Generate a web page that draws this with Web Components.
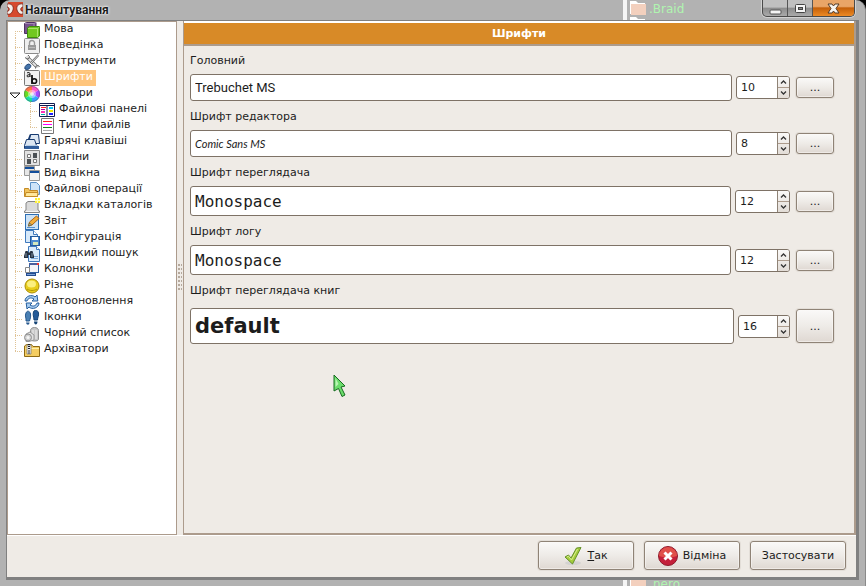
<!DOCTYPE html>
<html lang="uk">
<head>
<meta charset="utf-8">
<title>Налаштування</title>
<style>
html, body { height: 100%; margin: 0; }
body { background: #000; font: 11px/13px "DejaVu Sans", sans-serif; color: #1c1c1c; }
</style>
</head>
<body>
<settings-window></settings-window>
<script>
const svg = (body, size = 16) => `<svg viewBox="0 0 16 16" width="${size}" height="${size}" aria-hidden="true">${body}</svg>`;
const doc = '<path d="M4.500 .5h8l3 3v12h-11z" fill="#dcecfb" stroke="#3f79bd"/><path d="M12.500 .5v3h3" fill="#fff" stroke="#3f79bd"/>';
const ICONS = {
  lang: '<path d="M.5 1.500l2-1h9.500v10l-2 1H.5z" fill="#76528c" stroke="#4e3163"/><path d="M1 1.500h9l2-1M10 2v9" stroke="#a58ab5" fill="none"/><path d="M3.500 6l2-1.500h10v9.500l-2 1.500h-10z" fill="#72c820" stroke="#3f8b0c"/><path d="M4 6.500h9.500V15M13.500 6.500l2-1.500" stroke="#a7e66a" fill="none"/>',
  lock: '<rect x=".5" y=".5" width="15" height="15" rx="1" fill="#efefef" stroke="#8a8a8a"/><path d="M5.500 7V5a2.500 2.500 0 0 1 5 0v2" fill="none" stroke="#999" stroke-width="1.400"/><rect x="4" y="7" width="8" height="5" fill="#999"/><path d="M5 9.500h6" stroke="#bbb"/>',
  tools: '<path d="M3 3l10 10" stroke="#666" stroke-width="3.200"/><path d="M3 3l10 10" stroke="#e4e4e4" stroke-width="1.800"/><path d="M1 3.500L3 5l2-.5.5-2L4 1M11.500 14.500l.5-2.500 2.500-.5 1 1.500" stroke="#666" fill="#ddd"/><path d="M14.500 1L7 9" stroke="#666" stroke-width="2"/><path d="M14.500 1L7 9" stroke="#ddd"/><path d="M1 15c-.8-2 1-4.500 4-5l2 1.500c-.5 3-3 4.800-6 3.500z" fill="#4675ab" stroke="#1e4478"/>',
  fonts: '<rect x=".5" y=".5" width="15" height="15" rx="1" fill="#f1f1f1" stroke="#777"/><path d="M3 3c1-.8 3-.6 3 .7V7M6 4.800c-1.500-.2-3 0-3 1.200S5 7 6 5.800" fill="none" stroke="#111"/><path d="M8 5v9" stroke="#111" stroke-width="1.800"/><circle cx="10.300" cy="11" r="2.300" fill="none" stroke="#111" stroke-width="1.600"/>',
  colors: '<path d="M8 8V0a8 8 0 0 1 7 4z" fill="#ff58c8"/><path d="M8 8l7-4a8 8 0 0 1 0 8z" fill="#a44bff"/><path d="M8 8l7 4a8 8 0 0 1-7 4z" fill="#32a5ff"/><path d="M8 8v8a8 8 0 0 1-7-4z" fill="#17e39d"/><path d="M8 8l-7 4a8 8 0 0 1 0-8z" fill="#65e01f"/><path d="M8 8L1 4a8 8 0 0 1 7-4z" fill="#ff7440"/><circle cx="8" cy="8" r="4" fill="#fff" opacity=".45"/><circle cx="8" cy="8" r="2" fill="#fff" opacity=".6"/><circle cx="8" cy="8" r="7.500" fill="none" stroke="#557" opacity=".5"/>',
  panels: '<path d="M.5 1.500h15v13H.5z" fill="#fff" stroke="#111b50"/><path d="M0 3.500h16" stroke="#111b50"/><path d="M8 4v11" stroke="#111b50"/><path d="M2 5h5v1H2z" fill="#f22"/><path d="M2 7h4v1H2z" fill="#a0a"/><path d="M2 9h4v2H2z" fill="#f3b"/><path d="M2 12h4v1H2z" fill="#0aa"/><path d="M10 5h4v2h-4z" fill="#0cf"/><path d="M10 8h4v2h-4z" fill="#ee0"/><path d="M10 11h4v2h-4z" fill="#22f"/>',
  types: '<path d="M2.500 .5h12v15h-12z" fill="#fff" stroke="#777"/><path d="M4 3h9v1H4z" fill="#f22"/><path d="M4 6h9v1H4z" fill="#f0f"/><path d="M4 9h9v1H4z" fill="#167c20"/><path d="M4 12h9v1H4z" fill="#aaa"/>',
  keys: '<path d="M6.500 .5h8l1 9h-11z" fill="#dfe8f3" stroke="#173a70"/><path d="M6.500 .5l-2 5" stroke="#173a70" stroke-width="1.500"/><path d="M2.500 5.500h8l2 6v3H.5v-3z" fill="#dce6f2" stroke="#173a70"/><path d="M1 12h14v3H1z" fill="#315e9c"/><path d="M2 11.500h12" stroke="#b9cee6"/>',
  plugins: '<path d="M.5 .5h15v15H.5z" fill="#e2e2e2" stroke="#888"/><path d="M3.500 4.500h3v3h-3zM9.500 9.500h3v3h-3z" fill="#fff" stroke="#777"/><path d="M9 3h4v5H9zM3 9h4v5H3z" fill="#4b5054"/>',
  windows: '<path d="M.5 .5h10v9H.5z" fill="#e7e7e7" stroke="#999"/><path d="M1 2h9" stroke="#124e9c" stroke-width="2"/><path d="M5.500 4.500h10v10h-10z" fill="#f3f3f3" stroke="#999"/><path d="M6 6h9" stroke="#124e9c" stroke-width="2"/>',
  ops: '<path d="M6.500 .5h6l3 3v9h-9z" fill="#cfe4f8" stroke="#5b91c7"/><path d="M.5 6.500h4l1 2h8v6H.5z" fill="#f2c45d" stroke="#c48a25"/><path d="M1 14.500l1-4h12l-.5 4z" fill="#ffe79a" stroke="#c48a25"/>',
  tabs: '<path d="M.5 14.500V13l1.500-1V5l2-1.500h8l2 1.500v7l1.500 1v1.500z" fill="#dadada" stroke="#858585"/><path d="M2 13.500h12" stroke="#f5f5f5"/><path d="M11 0h5v5h-5z" fill="#fff033"/><path d="M13.500 0v5M11 2.500h5" stroke="#ffb"/>',
  log: '<rect x="1.500" y=".5" width="13" height="15" fill="#cce2f6" stroke="#2d6fb5"/><path d="M3 13.500h8" stroke="#5890cc"/><path d="M4.500 12l1-4 7-6 2.500 2.500-7 6.500z" fill="#f2ad3b" stroke="#ac6414"/><path d="M4.500 12l1-3 2 2z" fill="#f8dfb4" stroke="#664"/>',
  config: '<path d="M1.500 .5h8l4 4v8h-12z" fill="#d7e9fa" stroke="#3f79bd"/><path d="M9.500 .5v4h4" fill="#fff" stroke="#3f79bd"/><rect x="6.500" y="6.500" width="9" height="9" fill="#4c8bd0" stroke="#245b9e"/><path d="M8 7h6v3H8z" fill="#fff"/><path d="M9 12h5v3H9z" fill="#d5e9bd"/>',
  search: doc + '<path d="M7 10.500h7M7 12.500h7" stroke="#7ba7d6"/><path d="M0 10l1.500-5h2L5 7l1.500-2h2l1.500 5v2H6v-3H4v3H0z" fill="#273241"/><path d="M2 7v4M8 7v4" stroke="#7c8da1"/>',
  columns: '<rect x="5.500" y="1.500" width="9" height="9" fill="#f4f4f8" stroke="#3260a0"/><path d="M5 1h10v2H5z" fill="#4b5f9c"/><path d="M13 1h2v2h-2z" fill="#e33"/><path d="M1.500 5.500h4v5h-4z" fill="#fff" stroke="#888"/><path d="M2 12.500h10" stroke="#244b8f" stroke-width="3"/><path d="M3 12.500h8" stroke="#7ba3d8"/>',
  misc: '<circle cx="8" cy="8" r="7" fill="#e8cd1c" stroke="#a98c06"/><ellipse cx="7.500" cy="6" rx="4.500" ry="3.500" fill="#fff79a" opacity=".8"/><path d="M3 11c3 2 7 2 10 0" stroke="#b39706" fill="none"/>',
  update: '<path d="M1 7c0-5 7-7 10-4l2-2 .8 6H8l2-2C7 3 4 4 3 7z" fill="#a9cdf1" stroke="#245e9e"/><path d="M15 9c0 5-7 7-10 4l-2 2-.8-6H8l-2 2c3 2 6 1 7-2z" fill="#a9cdf1" stroke="#245e9e"/>',
  feet: '<path d="M2 3c1-3 4-2 4.500 1S6 9 5.500 11H2C2.500 8 .5 6 2 3z" fill="#4a80b4" stroke="#27588e"/><path d="M2 12.500h3.500c0 3-3 3-3.500 0z" fill="#27588e"/><path d="M9.500 2c1-3 4.500-2 5 1S13.500 7 13.500 10H10C10 7 8.500 5 9.500 2z" fill="#255b99" stroke="#174576"/><path d="M10 11.500h3.500c0 4-3.500 4-3.500 0z" fill="#174576"/>',
  trash: '<path d="M6.500 4.500c0-4 8-4 8 0v9c-1 2-7 2-8 0z" fill="#c7c7c7" stroke="#909090"/><path d="M9 4v9M12 4v9" stroke="#eee"/><path d="M2 8l4-2 4 3v5l-5 1.500H2z" fill="#e2e2e2" stroke="#999"/><circle cx="4" cy="11.500" r="3.500" fill="#d1d1d1" stroke="#909090"/><circle cx="4" cy="11.500" r="1.500" fill="#f6f6f6"/>',
  archive: '<path d="M.5 4l2-1.500h5l1.500 2h6.500v10H.5z" fill="#f4cd61" stroke="#8e6a14"/><path d="M1.500 6.500H15" stroke="#fff0a8"/><path d="M3 3h4v9H3z" fill="#eee" stroke="#777" stroke-width=".7"/><path d="M5 2v6" stroke="#222" stroke-width="2" stroke-dasharray="1 1"/><path d="M5 8v4" stroke="#333"/>'
};

const define = (name, html, setup) => {
  const template = document.createElement('template');
  template.innerHTML = '<style>*{box-sizing:border-box}svg{display:block;flex:none}button,input{font:inherit;color:inherit;margin:0}</style>' + html;
  customElements.define(name, class extends HTMLElement {
    connectedCallback() {
      if (this.shadowRoot) return;
      this.attachShadow({ mode: 'open' }).append(template.content.cloneNode(true));
      setup?.(this, this.shadowRoot);
    }
  });
};

define('tree-item', `<style>
:host { display: flex; height: 16px; }
.guide { width: 15px; flex: none; position: relative;
  background: repeating-linear-gradient(#dfc295 0 1px, transparent 1px 2px) 7px 0 / 1px 100% no-repeat; }
.branch { background:
  repeating-linear-gradient(#dfc295 0 1px, transparent 1px 2px) 7px 0 / 1px 100% no-repeat,
  repeating-linear-gradient(90deg, #dfc295 0 1px, transparent 1px 2px) 7px 9px / 8px 1px no-repeat; }
:host([first]) .branch { background-position: 7px 9px, 7px 9px; }
:host([last]) .branch { background-size: 1px 10px, 8px 1px; }
.outer { display: none; }
:host([nested]) .outer { display: block; }
:host([expanded]) .guide.branch { background: none; }
.twist { display: none; border: 0; padding: 0; background: none; }
:host([expanded]) .twist { display: block; margin: 6px 0 0 1px; }
.icon { margin-left: 1px; }
.label { margin-left: 1px; padding: 0 3px; white-space: nowrap; }
:host([selected]) .label { background: #ffc57c; color: #fff; }
</style>
<span class="guide outer"></span><span class="guide branch"><button class="twist" aria-label="Згорнути"><svg width="12" height="8" viewBox="0 0 12 8"><path d="M1 1h10L6 6z" fill="#fff" stroke="#222"/></svg></button></span>
<span class="icon"></span><span class="label"><slot></slot></span>`, (host, root) => {
  root.querySelector('.icon').innerHTML = svg(ICONS[host.getAttribute('icon')]);
  host.setAttribute('role', 'treeitem');
});

define('settings-tree', `<style>
:host { display: block; background: #fff; border: 1px solid #ac9b8c; overflow: hidden; }
</style><div role="tree" aria-label="Розділи"><slot></slot></div>`);

define('push-button', `<style>
:host { display: flex; }
button { flex: 1; display: flex; align-items: center; justify-content: center; gap: 5px; padding: 0 6px;
  min-height: 21px; border: 1px solid #8f8376; border-radius: 3px;
  background: linear-gradient(#faf9f8, #eeebe7 50%, #dfd8d2); box-shadow: inset 0 0 0 1px #fbfaf888, 0 0 0 1px #e3ded8; }
</style><button type="button"><slot name="icon"></slot><span><slot></slot></span></button>`);

define('spin-box', `<style>
:host { display: flex; height: 23px; background: #fff; border: 1px solid #7e7266; border-radius: 3px; }
input { flex: 1; min-width: 0; border: 0; padding: 0 0 0 4px; background: none; outline: 0; }
.steps { width: 12px; display: flex; flex-direction: column; border-left: 1px solid #8f8376; background: linear-gradient(#faf9f8, #e2dcd6); border-radius: 0 2px 2px 0; }
button { flex: 1; display: grid; place-items: center; border: 0; padding: 0; background: none; }
button + button { border-top: 1px solid #ac9b8c; }
</style><input inputmode="numeric" aria-label="Розмір шрифту"><span class="steps">
<button type="button" aria-label="Більше"><svg width="7" height="4" viewBox="0 0 7 4"><path d="M1 3.500l2.500-2.500L6 3.500" fill="none" stroke="#333" stroke-width="1.300"/></svg></button>
<button type="button" aria-label="Менше"><svg width="7" height="4" viewBox="0 0 7 4"><path d="M1 .5L3.500 3 6 .5" fill="none" stroke="#333" stroke-width="1.300"/></svg></button></span>`, (host, root) => {
  const input = root.querySelector('input');
  const [up, down] = root.querySelectorAll('button');
  up.onclick = () => input.value = +input.value + 1;
  down.onclick = () => input.value = +input.value - 1;
});

define('font-row', `<style>
:host { display: block; --field: 27px; --spin: 54px; --gap: 4px; --more: 21px; --above: 5px; }
label { display: block; line-height: 16px; }
.line { display: flex; align-items: center; margin-top: var(--above); }
input { flex: 1; min-width: 0; height: var(--field); border: 1px solid #7e7266; border-radius: 3px; background: #fff; padding: 0 4px; outline: 0; font: var(--face); }
spin-box { width: var(--spin); margin: 0 6px 0 var(--gap); }
push-button { width: 38px; height: var(--more); }
</style><label for="face"></label><div class="line"><input id="face"><spin-box></spin-box><push-button>...</push-button></div>`, (host, root) => {
  root.querySelector('label').textContent = host.getAttribute('label');
  root.querySelector('#face').value = host.getAttribute('face');
  root.querySelector('spin-box').shadowRoot.querySelector('input').value = host.getAttribute('size');
});

define('title-bar', `<style>
:host { display: flex; height: 20px; padding: 0 10px 0 7px; position: relative; }
h1 { margin: 0 0 0 2px; font: bold 12px/20px Roboto, sans-serif; text-shadow: 0 0 2px #fff, 0 0 3px #fff; flex: 1; }
.logo { margin-top: 2px; }
.controls { display: flex; height: 17px; border: 1px solid #4a4a4a; border-top: 0; border-radius: 0 0 5px 5px; overflow: hidden; box-shadow: 0 0 0 1px #d2d2d2; background: linear-gradient(#c0c0c0 45%, #8c8c8c 50%, #aaa); }
.controls button { width: 25px; border: 0; border-right: 1px solid #555; padding: 2px 0 0; background: none; display: grid; place-items: center; }
.controls button:last-child { width: 41px; border: 0; background: linear-gradient(#e9a567 40%, #c4600a 50%, #ed8a24); }
</style>
<svg class="logo" width="16" height="16" viewBox="0 0 16 16"><rect x="1" width="15" height="15" fill="#d64a2e"/><path d="M0 2c5-1 7 3 6 6s-3 5-6 4V9c3 1 3-4 0-4zM16 2c-5-1-7 3-6 6s3 5 6 4V9c-3 1-3-4 0-4z" fill="#f5eee9" stroke="#751c12" stroke-width=".8"/></svg>
<h1>Налаштування</h1>
<div class="controls">
<button aria-label="Згорнути"><svg width="13" height="12" viewBox="0 0 13 12"><rect x="1" y="7" width="11" height="4" rx="1" fill="#f4f4f4" stroke="#555"/></svg></button>
<button aria-label="Розгорнути"><svg width="13" height="12" viewBox="0 0 13 12"><rect x="1.500" y="1.500" width="10" height="8" rx="1" fill="#f4f4f4" stroke="#444"/><rect x="4.500" y="4.500" width="4" height="2" fill="#888" stroke="#444"/></svg></button>
<button aria-label="Закрити"><svg width="13" height="12" viewBox="0 0 13 12"><path d="M1 1h4l1.500 2L8 1h4L9 5.500l3 4.500H8L6.500 8 5 10H1l3-4.500z" fill="#f6f3ef" stroke="#553c28"/></svg></button>
</div>`);

define('backdrop-file', `<style>
:host { position: absolute; left: 623px; width: 140px; height: 20px; display: flex; align-items: flex-start; gap: var(--indent, 3px); border-left: 4px solid #f5f5f5; padding-left: 3px; color: #b0f5b0; font: 12px/18px "DejaVu Sans", sans-serif; overflow: hidden; }
</style><svg width="16" height="20" viewBox="0 0 16 20"><path d="M0 1h6l2 2h7v11H0zM0 17h6l2 2h7v1H0z" fill="#fff"/><path d="M1 4h15v11H1z" fill="#f3d0be"/></svg><slot></slot>`);

define('settings-window', `<style>
:host { display: flex; flex-direction: column; height: 100%; box-sizing: border-box; background: #b2b2b2; border-right: 1px solid #8a8a8a; border-radius: 10px 10px 0 0; position: relative; overflow: hidden; }
.body { flex: 1; min-height: 0; margin: 0 6px 6px; border: 1px solid #808080; border-width: 1px 3px 3px 1px; background: #efebe6; display: flex; flex-direction: column; position: relative; }
.main { flex: 1; min-height: 0; display: flex; }
settings-tree { width: 170px; }
.split { width: 6px; display: grid; place-items: center; }
.split i { width: 4px; height: 28px; background: radial-gradient(circle at 1px 1px, #b5a99d 0 1px, transparent 1px) 0 0 / 3px 4px; }
.page { flex: 1; display: flex; flex-direction: column; border: 1px solid #ac9b8c; border-width: 0 2px 2px 1px; padding-top: 2px; background: linear-gradient(#fff 0 2px, transparent 2px); min-width: 0; }
h2 { margin: 0; background: #d88a27; color: #fff; font: bold 11px/21px "DejaVu Sans", sans-serif; text-align: center; border-bottom: 2px solid #ac9b8c; }
form { display: flex; flex-direction: column; gap: 8px; padding: 7px 20px 0 6px; }
.mono { --field: 30px; --spin: 55px; --face: 16px/20px "DejaVu Sans Mono", monospace; }
footer { display: flex; justify-content: flex-end; gap: 10px; padding: 5px 10px 7px 0; border-top: 1px solid #fff; }
footer push-button { width: 96px; height: 29px; }
.cursor { position: absolute; left: 326px; top: 353px; }
</style>
<title-bar></title-bar>
<backdrop-file style="top:0">.Braid</backdrop-file>
<backdrop-file style="top:575px;--indent:7px">nero</backdrop-file>
<div class="body">
<div class="main">
<settings-tree>
<tree-item icon="lang" first>Мова</tree-item><tree-item icon="lock">Поведінка</tree-item><tree-item icon="tools">Інструменти</tree-item><tree-item icon="fonts" selected aria-selected="true">Шрифти</tree-item><tree-item icon="colors" expanded aria-expanded="true">Кольори</tree-item><tree-item icon="panels" nested>Файлові панелі</tree-item><tree-item icon="types" nested last>Типи файлів</tree-item><tree-item icon="keys">Гарячі клавіші</tree-item><tree-item icon="plugins">Плагіни</tree-item><tree-item icon="windows">Вид вікна</tree-item><tree-item icon="ops">Файлові операції</tree-item><tree-item icon="tabs">Вкладки каталогів</tree-item><tree-item icon="log">Звіт</tree-item><tree-item icon="config">Конфігурація</tree-item><tree-item icon="search">Швидкий пошук</tree-item><tree-item icon="columns">Колонки</tree-item><tree-item icon="misc">Різне</tree-item><tree-item icon="update">Автооновлення</tree-item><tree-item icon="feet">Іконки</tree-item><tree-item icon="trash">Чорний список</tree-item><tree-item icon="archive" last>Архіватори</tree-item>
</settings-tree>
<div class="split"><i></i></div>
<section class="page"><h2>Шрифти</h2>
<form>
<font-row label="Головний" face="Trebuchet MS" size="10" style="--face:13px/18px Roboto,sans-serif"></font-row>
<font-row label="Шрифт редактора" face="Comic Sans MS" size="8" style="--face:italic 11px/16px Lato,sans-serif"></font-row>
<font-row class="mono" label="Шрифт переглядача" face="Monospace" size="12"></font-row>
<font-row class="mono" label="Шрифт логу" face="Monospace" size="12"></font-row>
<font-row label="Шрифт переглядача книг" face="default" size="16" style="--field:36px;--spin:52px;--more:34px;--above:9px;--face:bold 21px/26px 'DejaVu Sans',sans-serif"></font-row>
</form></section>
</div>
<footer>
<push-button><svg slot="icon" width="18" height="18" viewBox="0 0 18 18"><ellipse cx="9" cy="16" rx="8" ry="2" fill="#ccc" opacity=".7"/><path d="M1 10l3.500-2L7 11 12.500 1 17 .5 8.500 17z" fill="#a5cd3d" stroke="#65902a"/><path d="M3 10l1.500-.8L7.500 13 13.500 2" fill="none" stroke="#d9ef92"/></svg><u>Т</u>ак</push-button>
<push-button><svg slot="icon" width="20" height="20" viewBox="0 0 20 20"><circle cx="10" cy="10" r="9.500" fill="#c4203a" stroke="#8e1c2c"/><path d="M1 10a9 9 0 0 1 18 0q-9 3-18 0z" fill="#e0504a"/><path d="M6.500 6.500l7 7M13.500 6.500l-7 7" stroke="#fff" stroke-width="3"/></svg>Відміна</push-button>
<push-button>Застосувати</push-button>
</footer>
<svg class="cursor" width="14" height="24" viewBox="0 0 14 24"><path d="M1 1l11 11-4 1 4 8-3 1.500-3.500-8L1 17z" fill="#6bdc6b" stroke="#176b20"/><path d="M2.500 4v9l3-3" fill="#baf5b4"/></svg>
</div>`);
</script>
</body>
</html>
